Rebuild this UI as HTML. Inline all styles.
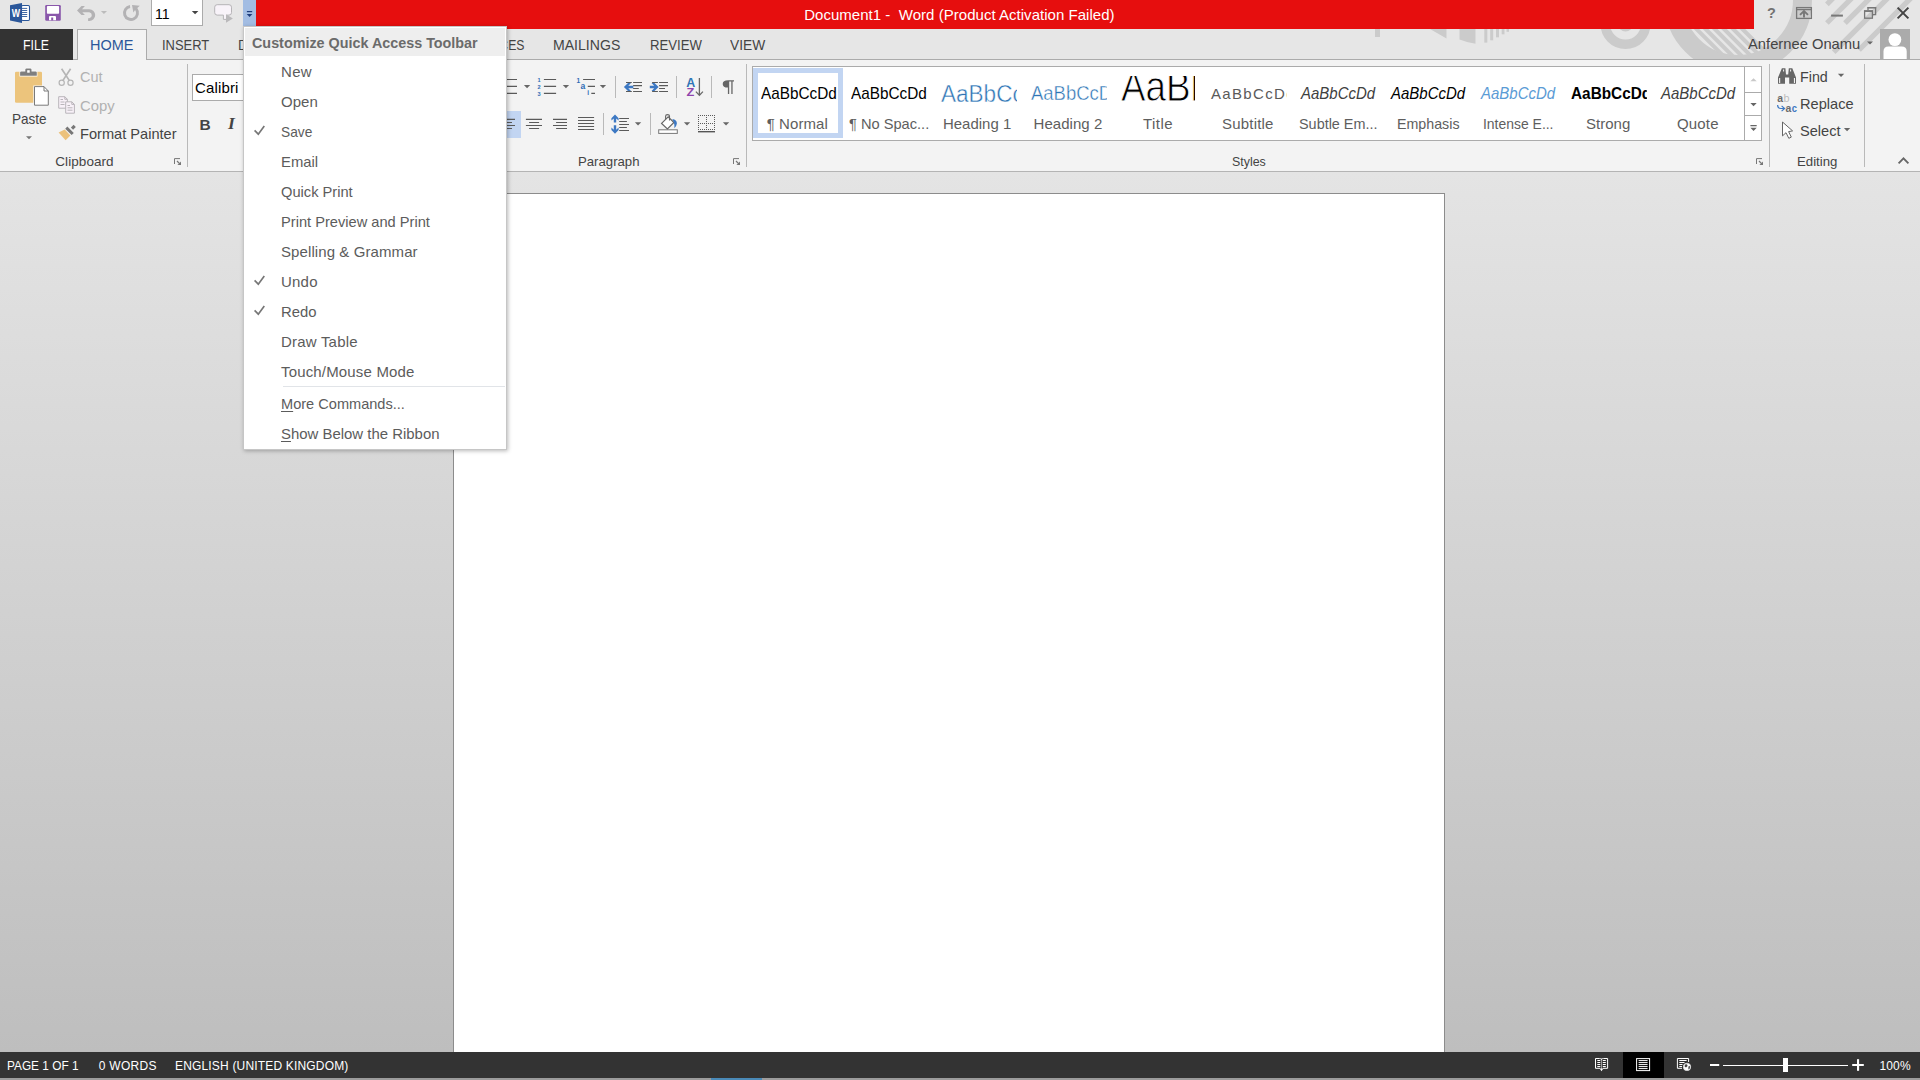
<!DOCTYPE html>
<html lang="en"><head><meta charset="utf-8"><title>Document1 - Word</title>
<style>
html,body{margin:0;padding:0}
body{width:1920px;height:1080px;overflow:hidden;position:relative;background:#e6e6e6;font-family:"Liberation Sans",sans-serif}
.a{position:absolute}
.t{position:absolute;white-space:pre;line-height:1}
svg{position:absolute;overflow:visible}
u{text-decoration-thickness:1px;text-underline-offset:2px}
</style></head><body>
<!-- title bar + tab row background -->
<div class=a style="left:0;top:0;width:1920px;height:60px;background:#e6e6e6"></div>
<!-- office background pattern -->
<svg style="left:0;top:0;overflow:hidden" width="1920" height="60" viewBox="0 0 1920 60">
<g fill="#cbcbcb">
<rect x="1375" y="0" width="5" height="37"/>
<path d="M1395 0 L1430 29 L1446.5 38.5 V0 Z"/>
<path d="M1459.5 0 H1475.5 V43.8 Q1467 42.5 1459.5 39.5 Z"/>
<rect x="1484.3" y="0" width="3" height="42.6"/>
<rect x="1490.2" y="0" width="3" height="40.3"/>
<rect x="1496" y="0" width="3" height="37.3"/>
<rect x="1501.7" y="0" width="2.8" height="34.3"/>
<rect x="1506.5" y="0" width="2.5" height="31.8"/>
</g>
<circle cx="1625.5" cy="24" r="20.2" fill="none" stroke="#cbcbcb" stroke-width="9.6"/>
<circle cx="1625.5" cy="24" r="7.5" fill="#cbcbcb"/>
<circle cx="1738" cy="0" r="64.5" fill="none" stroke="#cbcbcb" stroke-width="19"/>
<clipPath id="cd"><circle cx="1738" cy="0" r="56"/></clipPath>
<g stroke="#cbcbcb" stroke-width="4" fill="none" clip-path="url(#cd)">
<path d="M1667.5 0 l70 70"/><path d="M1676.6 0 l70 70"/><path d="M1685.8 0 l70 70"/><path d="M1695 0 l70 70"/><path d="M1704.2 0 l70 70"/><path d="M1713.4 0 l70 70"/>
</g>
<g stroke="#cbcbcb" stroke-width="5.2" fill="none">
<path d="M1826.9 4.3 L1836 -4.8"/><path d="M1826.9 23 L1855 -5.1"/><path d="M1845 23.2 L1873 -4.8"/><path d="M1833.7 52.2 L1891 -5.1"/><path d="M1859 50 L1914 -5"/>
</g>
</svg>
<!-- red title -->
<div class=a style="left:256px;top:0;width:1497.6px;height:28.7px;background:#e60e0e"></div>
<!-- QAT dropdown highlight -->
<div class=a style="left:243px;top:0;width:13px;height:26px;background:#a3bde3"></div>
<!-- tab row line -->
<div class=a style="left:0;top:59px;width:1920px;height:1px;background:#ababab"></div>
<!-- FILE tab -->
<div class=a style="left:0;top:29px;width:73px;height:31px;background:#333"></div>
<!-- HOME tab -->
<div class=a style="left:77px;top:29px;width:68px;height:31px;background:#f3f3f3;border:1px solid #ababab;border-bottom:none"></div>
<!-- ribbon body -->
<div class=a style="left:0;top:60px;width:1920px;height:111px;background:#f3f3f3"></div>
<div class=a style="left:0;top:171px;width:1920px;height:1px;background:#b4b4b4"></div>
<!-- doc area -->
<div class=a style="left:0;top:172px;width:1920px;height:880px;background:linear-gradient(#e4e4e4,#bebebe)"></div>
<div class=a style="left:453px;top:193px;width:990px;height:860px;background:#fff;border:1px solid #8c8c8c;border-bottom:none"></div>
<!-- status bar -->
<div class=a style="left:0;top:1052px;width:1920px;height:26.4px;background:#333"></div>
<div class=a style="left:0;top:1078.4px;width:1920px;height:1.6px;background:#9c9c9c"></div>
<div class=a style="left:711px;top:1078.4px;width:51px;height:1.6px;background:#4a8ab8"></div>
<div class=a style="left:1623px;top:1052px;width:41px;height:26px;background:#000"></div>
<!-- group separators -->
<div class=a style="left:187px;top:64px;width:1px;height:103px;background:#b9b9b9"></div>
<div class=a style="left:746px;top:64px;width:1px;height:103px;background:#b9b9b9"></div>
<div class=a style="left:1769px;top:64px;width:1px;height:103px;background:#b9b9b9"></div>
<div class=a style="left:1864px;top:64px;width:1px;height:103px;background:#b9b9b9"></div>
<!-- small separators in paragraph group -->
<div class=a style="left:615px;top:76px;width:1px;height:22px;background:#b9b9b9"></div>
<div class=a style="left:676px;top:76px;width:1px;height:22px;background:#b9b9b9"></div>
<div class=a style="left:711px;top:76px;width:1px;height:22px;background:#b9b9b9"></div>
<div class=a style="left:603px;top:113px;width:1px;height:22px;background:#b9b9b9"></div>
<div class=a style="left:650px;top:113px;width:1px;height:22px;background:#b9b9b9"></div>
<!-- align-left highlight -->
<div class=a style="left:495px;top:111px;width:26px;height:27px;background:#c2d5f2"></div>
<!-- QAT font size combo -->
<div class=a style="left:151px;top:-1px;width:50px;height:25px;background:#fff;border:1px solid #ababab"></div>
<!-- font name box -->
<div class=a style="left:192px;top:74px;width:120px;height:25px;background:#fff;border:1px solid #ababab"></div>
<!-- styles gallery -->
<div class=a style="left:752px;top:66px;width:1008px;height:73px;background:#fff;border:1px solid #ababab"></div>
<div class=a style="left:1744px;top:67px;width:1px;height:73px;background:#ababab"></div>
<div class=a style="left:1745px;top:92px;width:16px;height:1px;background:#ababab"></div>
<div class=a style="left:1745px;top:115px;width:16px;height:1px;background:#ababab"></div>
<div class=a style="left:753px;top:68px;width:80px;height:60px;border:5px solid #c2d5f2"></div>
<!-- avatar -->
<div class=a style="left:1880px;top:29px;width:30px;height:30px;background:#ababab;overflow:hidden">
<svg style="left:0;top:0" width="30" height="30" viewBox="0 0 30 30"><circle cx="14.9" cy="10.6" r="6.4" fill="#fff"/><path d="M3.5 30 V22.5 Q3.5 17.5 8.5 17.5 H21.7 Q26.7 17.5 26.7 22.5 V30 Z" fill="#fff"/></svg>
</div>
<!-- top icons -->
<svg style="left:0;top:0" width="1920" height="180" viewBox="0 0 1920 180" font-family="Liberation Sans, sans-serif">
<!-- Word logo -->
<rect x="21.5" y="5.5" width="8" height="15" rx="1.2" fill="#fff" stroke="#2b579a" stroke-width="1.1"/>
<g stroke="#2b579a" stroke-width="0.9"><path d="M22 8.4H27.2M22 10.5H27.2M22 12.5H27.2M22 14.5H27.2M22 16.5H27.2"/></g>
<path d="M10 5.3 L22 3 V23 L10 20.6 Z" fill="#2b579a"/>
<text x="11.8" y="16.8" font-size="10.5" font-weight="700" fill="#fff" textLength="8.3" lengthAdjust="spacingAndGlyphs">W</text>
<!-- Save -->
<rect x="45.2" y="5" width="15.6" height="15.8" rx="1.2" fill="#8a57ab"/>
<rect x="46.9" y="6" width="12.2" height="7.8" rx="0.8" fill="#fff"/>
<path d="M49 20.2 V17 Q49 16 50 16 H55 Q56 16 56 17 V20.2 H53.2 V17.4 H51.2 V20.2 Z" fill="#fff"/>
<!-- Undo -->
<g fill="#b3b2b4" stroke="none">
<path d="M77 10.6 L81.5 6 L84.9 6.1 L82 9.2 H89.3 A5.9 5.9 0 0 1 89.3 21 H88.1 V18.3 H89.3 A3.05 3.05 0 0 0 89.3 12.3 H82.3 L84.9 14.9 L81.5 15 Z"/>
<path d="M100.9 10.9 H107 L103.95 14 Z" fill="#bcbcbc"/>
<!-- Repeat -->
<path d="M132 5 L139.8 5.7 L137.3 8 A8 8 0 1 1 129.9 5 L130.2 7.95 A5.05 5.05 0 1 0 135.1 10 L133.4 12.6 Z"/>
</g>
<!-- combo arrow -->
<path d="M191.8 11 H198.4 L195.1 14.3 Z" fill="#444"/>
<!-- comment icon -->
<path d="M217.2 4.7 H229 Q231.5 4.7 231.5 7.2 V12.6 Q231.5 15.1 229 15.1 H226.5 V19.4 H223.4 V15.1 H217.2 Q214.7 15.1 214.7 12.6 V7.2 Q214.7 4.7 217.2 4.7 Z" fill="#f8f3f9" stroke="#b6b4b7" stroke-width="1"/>
<path d="M226 14.2 V22.7 L232.9 18.4 Z" fill="#bab9bb"/>
<!-- customize arrow -->
<rect x="246.9" y="11" width="5.3" height="1.2" fill="#1e3d7b"/><path d="M246.7 14.1 H252.4 L249.55 17 Z" fill="#1e3d7b"/>
<!-- window controls -->
<g fill="none" stroke="#777" stroke-width="1.3">
<rect x="1796.6" y="7.6" width="14.8" height="10.8"/><path d="M1796.6 9.6 H1811.4"/>
<path d="M1804 17.6 V11.6 M1800 14.9 L1804 11 L1808 14.9" stroke-width="1.9"/>
<path d="M1868 10.3 V7.6 H1875.6 V14.6 H1872.8" />
<rect x="1864.6" y="11" width="7.8" height="7.2"/>
</g>
<rect x="1864" y="10.3" width="9" height="1.6" fill="#777"/><rect x="1867.5" y="7" width="8.7" height="1.4" fill="#777"/>
<rect x="1831.1" y="14.6" width="11.8" height="2" fill="#777"/>
<path d="M1897.6 7.6 L1908.4 18.4 M1908.4 7.6 L1897.6 18.4" stroke="#444" stroke-width="2" fill="none"/>
<path d="M1867 41.6 H1873 L1870 44.6 Z" fill="#666"/>
<!-- Paste -->
<rect x="15" y="71.7" width="27" height="31.1" rx="1.3" fill="#ecc47c"/>
<path d="M19.5 76.4 V72.2 Q19.5 70.8 20.9 70.8 H24.8 V69.3 Q24.8 67.8 26.3 67.8 H30.5 Q32 67.8 32 69.3 V70.8 H36 Q37.4 70.8 37.4 72.2 V76.4 Z" fill="#fff"/>
<path d="M20.1 75.8 V72.4 Q20.1 71.4 21.1 71.4 H25.3 V69.4 Q25.3 68.4 26.3 68.4 H30.5 Q31.5 68.4 31.5 69.4 V71.4 H35.8 Q36.8 71.4 36.8 72.4 V75.8 Z" fill="#7f7f7f"/>
<rect x="27.2" y="70.2" width="2.5" height="2.5" fill="#fff"/>
<path d="M33.3 85.4 H44.6 L49.5 90.4 V106.3 H33.3 Z" fill="#f3f3f3"/>
<path d="M34.5 86.6 H44 L48.3 91 V105.2 H34.5 Z" fill="#fff" stroke="#7a7a7a" stroke-width="1"/>
<path d="M44 86.6 V91 H48.3" fill="none" stroke="#7a7a7a" stroke-width="1"/>
<path d="M26 136.3 H32 L29 139.3 Z" fill="#777"/>
<!-- Cut -->
<g fill="none" stroke="#b5b5b5" stroke-width="1.2">
<circle cx="61.7" cy="82.7" r="2.6"/><circle cx="70.5" cy="82.7" r="2.6"/>
</g>
<path d="M61.6 68.8 L69.4 80.6 M70.6 68.8 L62.8 80.6" fill="none" stroke="#b5b5b5" stroke-width="1.7"/>
<!-- Copy -->
<g fill="#f8f1f8" stroke="#b9b5ba" stroke-width="1">
<path d="M58.7 96.7 H64.8 L67.4 99.3 V108.2 H58.7 Z"/>
<path d="M65.7 101.8 H71.8 L74.4 104.4 V113.2 H65.7 Z"/>
</g>
<g fill="none" stroke="#b9b5ba" stroke-width="1"><path d="M64.8 96.7 V99.3 H67.4 M71.8 101.8 V104.4 H74.4"/>
<path d="M60.5 99.5 H63 M60.5 102 H64.5 M60.5 104.5 H64.5 M67.5 105.5 H70 M67.5 107.8 H72.5 M67.5 110.2 H72.5"/></g>
<!-- Format painter -->
<path d="M58.6 132.4 L64.7 129.6 L70.4 135.4 L65.6 140.2 Z" fill="#ecc27c"/>
<path d="M66.3 127.6 L72.7 134" stroke="#777" stroke-width="3" fill="none"/>
<path d="M72 128.6 L74.7 125.9" stroke="#777" stroke-width="3.1" fill="none"/>
<!-- dialog launchers -->
<g id="dl" fill="none" stroke="#777" stroke-width="1"><path d="M180 158.6 H174.5 V164"/><path d="M177 161 L180.3 164.3" stroke-width="1.2"/><path d="M181 161.4 V165 H177.4 Z" fill="#777" stroke="none"/></g>
<use href="#dl" x="559"/><use href="#dl" x="1582"/>
<!-- B/I area done in text -->
<!-- bullets (partly hidden) -->
<g stroke="#5a5a5a" stroke-width="1.2" fill="none">
<path d="M505 79.5 H517 M505 86.4 H517 M505 93.4 H517"/>
<path d="M543.9 79.5 H556.1 M543.9 86.4 H556.1 M543.9 93.4 H556.1"/>
<path d="M583.1 79.5 H595 M587.8 86.4 H595 M591.3 93.4 H595"/>
</g>
<g fill="#666"><path id="da" d="M523.9 85 H530.2 L527.05 88.2 Z"/>
<use href="#da" x="38.9"/><use href="#da" x="75.9"/>
<use href="#da" x="111" y="37.2"/><use href="#da" x="160" y="37.2"/><use href="#da" x="199" y="37.2"/>
<use href="#da" x="1314" y="-11.2"/><use href="#da" x="1320" y="43.1"/>
<use href="#da" x="1226.5" y="18"/>
<path d="M1750.4 125 H1756.7 V126.2 H1750.4 Z M1750.4 127.8 H1756.7 L1753.55 131 Z"/>
</g>
<path d="M1750.4 81.3 H1756.7 L1753.55 78.2 Z" fill="#c8c8c8"/>
<g font-size="5.6" font-weight="700" fill="#2e6cb5">
<text x="537.5" y="82">1</text><text x="537.5" y="89">2</text><text x="537.5" y="96">3</text>
<text x="576.5" y="82.7" font-size="6.5">1</text><text x="580.4" y="88.7" font-size="8.6">a</text><text x="587.2" y="95" font-size="6.5">i</text>
</g>
<!-- indent icons -->
<g stroke="#5a5a5a" stroke-width="1.2" fill="none">
<path d="M626 82.5 H631.8 M633.1 82.5 H642 M633.1 85.6 H642 M633.1 88.5 H638.8 M626 91.5 H631.8 M633.1 91.5 H642"/>
<path d="M652.1 82.5 H657.9 M659.1 82.5 H668 M659.1 85.6 H668 M659.1 88.5 H665 M652.1 91.5 H657.9 M659.1 91.5 H668"/>
</g>
<g fill="#3c78c3">
<path d="M623.9 87 L628 83 H631 L628.3 85.8 H633.3 V88.2 H628.3 L631 91 H628 Z"/>
<path d="M658.6 87 L654.5 83 H651.5 L654.2 85.8 H649.8 V88.2 H654.2 L651.5 91 H654.5 Z"/>
</g>
<!-- sort -->
<text x="686.3" y="86.6" font-size="12" font-weight="700" fill="#2e75b6" textLength="9" lengthAdjust="spacingAndGlyphs">A</text>
<text x="686.5" y="96" font-size="10.8" font-weight="700" fill="#8e44ad" textLength="7.8" lengthAdjust="spacingAndGlyphs">Z</text>
<path d="M699.4 78.1 V95.2 M695.9 91.6 L699.4 95.4 L702.9 91.6" stroke="#666" stroke-width="1.3" fill="none"/>
<!-- pilcrow -->
<path d="M728.2 80.3 H734 V81.6 H732.6 V94 H731.3 V81.6 H729.2 V94 H727.9 V87.6 Q722.7 87.4 722.7 83.9 Q722.7 80.3 728.2 80.3 Z" fill="#666"/>
<!-- alignment icons -->
<g stroke="#5a5a5a" stroke-width="1.2" fill="none">
<path d="M505 119.4 H515 M505 122.5 H512 M505 125.5 H515 M505 128.5 H512"/>
<path d="M525.9 119.4 H542 M529.1 122.5 H539.1 M525.9 125.5 H542 M529.1 128.5 H539.1"/>
<path d="M553 119.4 H567 M556.1 122.5 H567 M553 125.5 H567 M556.1 128.5 H567"/>
<path d="M578 117.5 H594.1 M578 120.5 H594.1 M578 123.5 H594.1 M578 126.5 H594.1 M578 129.5 H594.1"/>
<path d="M619.2 118.5 H629 M619.2 121.5 H626.9 M619.2 124.5 H629 M619.2 127.5 H626.9 M619.2 130.5 H629"/>
</g>
<g fill="#3c78c3"><path d="M615 114.4 L618.6 118.2 V120.6 L616.2 118.4 V122.5 H613.8 V118.4 L611.4 120.6 V118.2 Z"/>
<path d="M615 133.8 L618.6 130 V127.6 L616.2 129.8 V125.2 H613.8 V129.8 L611.4 127.6 V130 Z"/></g>
<!-- shading -->
<rect x="658.7" y="129.8" width="18.6" height="3.6" fill="#fff" stroke="#777" stroke-width="1"/>
<path d="M661.6 123.4 L668.2 116.9 L673.9 122.5 L667.4 129 Z" fill="#fff" stroke="#666" stroke-width="1.2"/>
<path d="M669.5 120.6 V116 Q669.5 114.6 667.5 114.6 Q665.6 114.6 665.6 116.3 V119.2" fill="none" stroke="#666" stroke-width="1.1"/>
<path d="M672.3 119 Q676.9 119.8 676.9 123.5 Q676.6 126 674.4 128.2 Q674.6 124.5 673.9 122.5 Z" fill="#3c78c3"/>
<!-- borders -->
<g stroke="#5a5a5a" stroke-width="1" fill="none" stroke-dasharray="1 1" shape-rendering="crispEdges">
<path d="M698 115.5 H715 M698 123.5 H715 M698 129.5 H715 M698.5 115 V130 M706.5 115 V130 M714.5 115 V130"/>
</g>
<path d="M698 131.7 H715" stroke="#555" stroke-width="1.4"/>
<!-- Find: binoculars -->
<g fill="#666">
<path d="M1781.9 68.2 H1785.4 L1786 74.5 H1788.2 L1788.8 68.2 H1792.3 L1796 77.5 V83.8 H1789.2 V77.6 H1785 V83.8 H1778 V77.5 Z"/>
</g>
<g fill="#f3f3f3"><rect x="1779.1" y="78" width="1.1" height="5"/><rect x="1793.9" y="78" width="1.1" height="5"/><rect x="1783.1" y="69.5" width="1" height="2"/><rect x="1790.1" y="69.5" width="1" height="2"/></g>
<!-- Replace -->
<g font-size="11" font-weight="700">
<text x="1777.3" y="102.4" fill="#6a6a6a" textLength="5.8" lengthAdjust="spacingAndGlyphs">a</text><text x="1783.6" y="102.4" fill="#bdbdbd" font-weight="400" font-size="11.5" textLength="6" lengthAdjust="spacingAndGlyphs">b</text>
<text x="1785.6" y="111.5" fill="#6a6a6a" textLength="5.8" lengthAdjust="spacingAndGlyphs">a</text><text x="1791.8" y="111.5" fill="#3c78c3" textLength="5.2" lengthAdjust="spacingAndGlyphs">c</text>
</g>
<path d="M1777.6 105 Q1777.6 108.5 1781 108.5 H1784" fill="none" stroke="#3c78c3" stroke-width="1.2"/>
<path d="M1781.6 105.9 L1784.6 108.5 L1781.6 111.1" fill="none" stroke="#3c78c3" stroke-width="1.2"/>
<!-- Select cursor -->
<path d="M1782.5 122 V135.9 L1786 132.7 L1788.8 138.3 L1791.3 137.1 L1788.6 131.6 L1792.6 130.9 Z" fill="#fff" stroke="#666" stroke-width="1"/>
<!-- collapse chevron -->
<path d="M1898.6 163.4 L1903.5 158.3 L1908.4 163.4" fill="none" stroke="#666" stroke-width="1.8"/>
</svg>
<!-- status bar icons -->
<svg style="left:0;top:1052px" width="1920" height="28" viewBox="0 1052 1920 28">
<g fill="none" stroke="#fff" stroke-width="1">
<path d="M1601.5 1059.5 Q1601 1058.5 1599.5 1058.5 H1595.5 V1068.3 H1600 M1601.5 1059.5 Q1602 1058.5 1603.5 1058.5 H1607.6 V1068.3 H1603"/>
<path d="M1601.5 1058.5 V1070" stroke-dasharray="1 1"/>
<path d="M1597.3 1060.5 H1600.3 M1597.3 1062.5 H1600.3 M1597.3 1064.5 H1600.3 M1597.3 1066.5 H1600.3 M1602.8 1060.5 H1605.8 M1602.8 1062.5 H1605.8 M1602.8 1064.5 H1605.8 M1602.8 1066.5 H1605.8"/>
<rect x="1636.6" y="1058.6" width="13" height="12"/>
<path d="M1638.6 1060.6 H1647.6 M1638.6 1062.6 H1647.6 M1638.6 1064.6 H1647.6 M1638.6 1066.6 H1647.6 M1638.6 1068.6 H1647.6"/>
<path d="M1682 1068.3 H1677.4 V1058.5 H1688.6 V1062"/>
<path d="M1679.3 1060.5 H1686.6 M1679.3 1062.5 H1684.5 M1679.3 1064.5 H1682.5 M1679.3 1066.5 H1682"/>
</g>
<path d="M1599.7 1068.5 H1603.3 L1601.5 1071.2 Z" fill="#fff"/>
<circle cx="1687" cy="1066.9" r="3.7" fill="#fff" stroke="#ddd" stroke-width="0.8"/>
<path d="M1685 1064.6 L1687 1064.2 L1687.6 1066 L1686 1067.6 L1684.6 1066.6 Z M1688.4 1066.4 L1690 1066 L1689.8 1068.4 L1688.4 1069.4 Z" fill="#444"/>
<rect x="1710" y="1064" width="9.2" height="2" fill="#fff"/>
<rect x="1723" y="1065" width="125" height="1" fill="#fff"/>
<rect x="1783" y="1058" width="5" height="14" fill="#fff"/>
<rect x="1852.2" y="1064" width="11.6" height="2" fill="#fff"/><rect x="1857" y="1059.2" width="2.1" height="11.6" fill="#fff"/>
</svg>
<div class=t style='left:154.7px;top:6px;font-size:15px;color:#000;transform:scaleX(0.9436);transform-origin:0 0;'>11</div>
<div class=t style='left:804.2px;top:7px;font-size:15px;color:#fff;letter-spacing:0.031px;'>Document1 -  Word (Product Activation Failed)</div>
<div class=t style='left:23.4px;top:37px;font-size:15px;color:#fff;transform:scaleX(0.8205);transform-origin:0 0;'>FILE</div>
<div class=t style='left:90.2px;top:37px;font-size:15px;color:#2b579a;transform:scaleX(0.9644);transform-origin:0 0;'>HOME</div>
<div class=t style='left:162.2px;top:37px;font-size:15px;color:#444;transform:scaleX(0.8623);transform-origin:0 0;'>INSERT</div>
<div class=t style='left:237.7px;top:37px;font-size:15px;color:#444;transform:scaleX(0.9076);transform-origin:0 0;'>DESIGN</div>
<div class=t style='left:318.7px;top:37px;font-size:15px;color:#444;transform:scaleX(0.8993);transform-origin:0 0;'>PAGE LAYOUT</div>
<div class=t style='left:440.7px;top:37px;font-size:15px;color:#444;transform:scaleX(0.8144);transform-origin:0 0;'>REFERENCES</div>
<div class=t style='left:553.2px;top:37px;font-size:15px;color:#444;transform:scaleX(0.9388);transform-origin:0 0;'>MAILINGS</div>
<div class=t style='left:649.5px;top:37px;font-size:15px;color:#444;transform:scaleX(0.8769);transform-origin:0 0;'>REVIEW</div>
<div class=t style='left:730.1px;top:37px;font-size:15px;color:#444;transform:scaleX(0.9180);transform-origin:0 0;'>VIEW</div>
<div class=t style='left:1748.0px;top:36px;font-size:15px;color:#444;transform:scaleX(0.9829);transform-origin:0 0;'>Anfernee Onamu</div>
<div class=t style='left:1766.9px;top:6px;font-size:14.5px;color:#737373;font-weight:700;'>?</div>
<div class=t style='left:12.1px;top:111px;font-size:15px;color:#444;transform:scaleX(0.9020);transform-origin:0 0;'>Paste</div>
<div class=t style='left:80.1px;top:69px;font-size:15px;color:#b1b1b1;transform:scaleX(0.9681);transform-origin:0 0;'>Cut</div>
<div class=t style='left:80.1px;top:98px;font-size:15px;color:#b1b1b1;transform:scaleX(0.9905);transform-origin:0 0;'>Copy</div>
<div class=t style='left:80.2px;top:126px;font-size:15px;color:#444;transform:scaleX(0.9738);transform-origin:0 0;'>Format Painter</div>
<div class=t style='left:55.3px;top:155px;font-size:13.5px;color:#444;letter-spacing:0.063px;'>Clipboard</div>
<div class=t style='left:195.1px;top:80px;font-size:15px;color:#000;letter-spacing:0.131px;'>Calibri</div>
<div class=t style='left:199.6px;top:117px;font-size:15.5px;color:#444;font-weight:700;'>B</div>
<div class=t style='left:228.0px;top:115px;font-size:17.5px;color:#444;font-weight:700;font-style:italic;font-family:"Liberation Serif",serif;'>I</div>
<div class=t style='left:578.2px;top:155px;font-size:13.5px;color:#444;transform:scaleX(0.9755);transform-origin:0 0;'>Paragraph</div>
<div class=t style='left:1231.7px;top:155px;font-size:13.5px;color:#444;transform:scaleX(0.9193);transform-origin:0 0;'>Styles</div>
<div class=t style='left:1797.1px;top:155px;font-size:13.5px;color:#444;transform:scaleX(0.9787);transform-origin:0 0;'>Editing</div>
<div class=t style='left:1800.3px;top:69px;font-size:15px;color:#444;transform:scaleX(0.9525);transform-origin:0 0;'>Find</div>
<div class=t style='left:1800.3px;top:96px;font-size:15px;color:#444;transform:scaleX(0.9737);transform-origin:0 0;'>Replace</div>
<div class=t style='left:1800.3px;top:123px;font-size:15px;color:#444;transform:scaleX(0.9735);transform-origin:0 0;'>Select</div>
<div class=a style='left:760px;top:70px;width:76.5px;height:42px;overflow:hidden'><div class=t style='left:0.5px;top:15px;font-size:17px;color:#000;transform:scaleX(0.9012);transform-origin:0 0;'>AaBbCcDd</div></div>
<div class=a style='left:850px;top:70px;width:76.5px;height:42px;overflow:hidden'><div class=t style='left:0.5px;top:15px;font-size:17px;color:#000;transform:scaleX(0.9012);transform-origin:0 0;'>AaBbCcDd</div></div>
<div class=a style='left:940px;top:70px;width:76.5px;height:42px;overflow:hidden'><div class=t style='left:0.9px;top:13px;font-size:23px;color:#2e74b5;-webkit-text-stroke:0.45px #fff;transform:scaleX(0.9801);transform-origin:0 0;'>AaBbCc</div></div>
<div class=a style='left:1030px;top:70px;width:76.5px;height:42px;overflow:hidden'><div class=t style='left:0.7px;top:14px;font-size:19.5px;color:#2e74b5;-webkit-text-stroke:0.4px #fff;transform:scaleX(0.9483);transform-origin:0 0;'>AaBbCcD</div></div>
<div class=a style='left:1121px;top:76px;width:74px;height:36px;overflow:hidden'><div class=t style='left:-0.3px;top:-10px;font-size:42px;color:#000;-webkit-text-stroke:0.9px #fff;transform:scaleX(0.8779);transform-origin:0 0;'>AaBb</div></div>
<div class=a style='left:1210px;top:70px;width:76.5px;height:42px;overflow:hidden'><div class=t style='left:0.9px;top:16px;font-size:15px;color:#5a5a5a;letter-spacing:1.357px;'>AaBbCcDd</div></div>
<div class=a style='left:1300px;top:70px;width:76.5px;height:42px;overflow:hidden'><div class=t style='left:0.9px;top:15px;font-size:17px;color:#404040;font-style:italic;transform:scaleX(0.8822);transform-origin:0 0;'>AaBbCcDd</div></div>
<div class=a style='left:1390px;top:70px;width:76.5px;height:42px;overflow:hidden'><div class=t style='left:0.9px;top:15px;font-size:17px;color:#000;font-style:italic;transform:scaleX(0.8822);transform-origin:0 0;'>AaBbCcDd</div></div>
<div class=a style='left:1480px;top:70px;width:76.5px;height:42px;overflow:hidden'><div class=t style='left:0.9px;top:15px;font-size:17px;color:#5b9bd5;font-style:italic;transform:scaleX(0.8822);transform-origin:0 0;'>AaBbCcDd</div></div>
<div class=a style='left:1570px;top:70px;width:76.5px;height:42px;overflow:hidden'><div class=t style='left:0.5px;top:15px;font-size:17px;color:#000;font-weight:700;transform:scaleX(0.9032);transform-origin:0 0;'>AaBbCcDd</div></div>
<div class=a style='left:1660px;top:70px;width:76.5px;height:42px;overflow:hidden'><div class=t style='left:0.9px;top:15px;font-size:17px;color:#404040;font-style:italic;transform:scaleX(0.8822);transform-origin:0 0;'>AaBbCcDd</div></div>
<div class=t style='left:766.7px;top:116px;font-size:15px;color:#5e5e5e;letter-spacing:0.089px;'>¶ Normal</div>
<div class=t style='left:849.2px;top:116px;font-size:15px;color:#5e5e5e;transform:scaleX(0.9749);transform-origin:0 0;'>¶ No Spac...</div>
<div class=t style='left:943.3px;top:116px;font-size:15px;color:#5e5e5e;transform:scaleX(0.9972);transform-origin:0 0;'>Heading 1</div>
<div class=t style='left:1033.5px;top:116px;font-size:15px;color:#5e5e5e;letter-spacing:0.051px;'>Heading 2</div>
<div class=t style='left:1142.9px;top:116px;font-size:15px;color:#5e5e5e;letter-spacing:0.505px;'>Title</div>
<div class=t style='left:1222.0px;top:116px;font-size:15px;color:#5e5e5e;letter-spacing:0.193px;'>Subtitle</div>
<div class=t style='left:1298.9px;top:116px;font-size:15px;color:#5e5e5e;transform:scaleX(0.9608);transform-origin:0 0;'>Subtle Em...</div>
<div class=t style='left:1397.3px;top:116px;font-size:15px;color:#5e5e5e;transform:scaleX(0.9490);transform-origin:0 0;'>Emphasis</div>
<div class=t style='left:1482.9px;top:116px;font-size:15px;color:#5e5e5e;transform:scaleX(0.9290);transform-origin:0 0;'>Intense E...</div>
<div class=t style='left:1586.0px;top:116px;font-size:15px;color:#5e5e5e;letter-spacing:0.019px;'>Strong</div>
<div class=t style='left:1676.9px;top:116px;font-size:15px;color:#5e5e5e;letter-spacing:0.181px;'>Quote</div>
<div class=t style='left:7.2px;top:1060px;font-size:12px;color:#fff;transform:scaleX(0.9866);transform-origin:0 0;'>PAGE 1 OF 1</div>
<div class=t style='left:98.7px;top:1060px;font-size:12px;color:#fff;letter-spacing:0.297px;'>0 WORDS</div>
<div class=t style='left:175.0px;top:1060px;font-size:12px;color:#fff;letter-spacing:0.172px;'>ENGLISH (UNITED KINGDOM)</div>
<div class=t style='left:1879.4px;top:1060px;font-size:12px;color:#fff;letter-spacing:0.166px;'>100%</div><!-- dropdown menu -->
<div class=a style="left:243px;top:26px;width:262px;height:422px;background:#fff;border:1px solid #c6c6c6;box-shadow:1px 1px 4px rgba(0,0,0,.28)"></div>
<div class=a style="left:245px;top:28px;width:260px;height:28px;background:#eee"></div>
<div class=a style="left:283px;top:386px;width:222px;height:1px;background:#e1e4e8"></div>
<svg style="left:0;top:0" width="600" height="460" viewBox="0 0 600 460"><g fill="none" stroke="#777" stroke-width="1.7">
<path d="M254.6 130.4 L258.3 134.2 L264.3 126"/>
<path d="M254.6 280.4 L258.3 284.2 L264.3 276"/>
<path d="M254.6 310.4 L258.3 314.2 L264.3 306"/>
</g></svg>
<div class=t style='left:251.9px;top:35px;font-size:15px;color:#6b6b6b;font-weight:700;transform:scaleX(0.9567);transform-origin:0 0;'>Customize Quick Access Toolbar</div>
<div class=t style='left:281.0px;top:64px;font-size:15px;color:#5c5c5c;letter-spacing:0.342px;'>New</div>
<div class=t style='left:281.0px;top:94px;font-size:15px;color:#5c5c5c;letter-spacing:0.032px;'>Open</div>
<div class=t style='left:281.0px;top:124px;font-size:15px;color:#5c5c5c;transform:scaleX(0.9151);transform-origin:0 0;'>Save</div>
<div class=t style='left:281.0px;top:154px;font-size:15px;color:#5c5c5c;transform:scaleX(0.9889);transform-origin:0 0;'>Email</div>
<div class=t style='left:281.0px;top:184px;font-size:15px;color:#5c5c5c;transform:scaleX(0.9774);transform-origin:0 0;'>Quick Print</div>
<div class=t style='left:281.0px;top:214px;font-size:15px;color:#5c5c5c;transform:scaleX(0.9759);transform-origin:0 0;'>Print Preview and Print</div>
<div class=t style='left:281.0px;top:244px;font-size:15px;color:#5c5c5c;letter-spacing:0.091px;'>Spelling &amp; Grammar</div>
<div class=t style='left:281.0px;top:274px;font-size:15px;color:#5c5c5c;letter-spacing:0.214px;'>Undo</div>
<div class=t style='left:281.0px;top:304px;font-size:15px;color:#5c5c5c;transform:scaleX(0.9900);transform-origin:0 0;'>Redo</div>
<div class=t style='left:281.0px;top:334px;font-size:15px;color:#5c5c5c;letter-spacing:0.204px;'>Draw Table</div>
<div class=t style='left:281.0px;top:364px;font-size:15px;color:#5c5c5c;letter-spacing:0.166px;'>Touch/Mouse Mode</div>
<div class=t style='left:281.0px;top:396px;font-size:15px;color:#5c5c5c;transform:scaleX(0.9714);transform-origin:0 0;'><u>M</u>ore Commands...</div>
<div class=t style='left:281.0px;top:426px;font-size:15px;color:#5c5c5c;transform:scaleX(0.9951);transform-origin:0 0;'><u>S</u>how Below the Ribbon</div>
</body></html>
